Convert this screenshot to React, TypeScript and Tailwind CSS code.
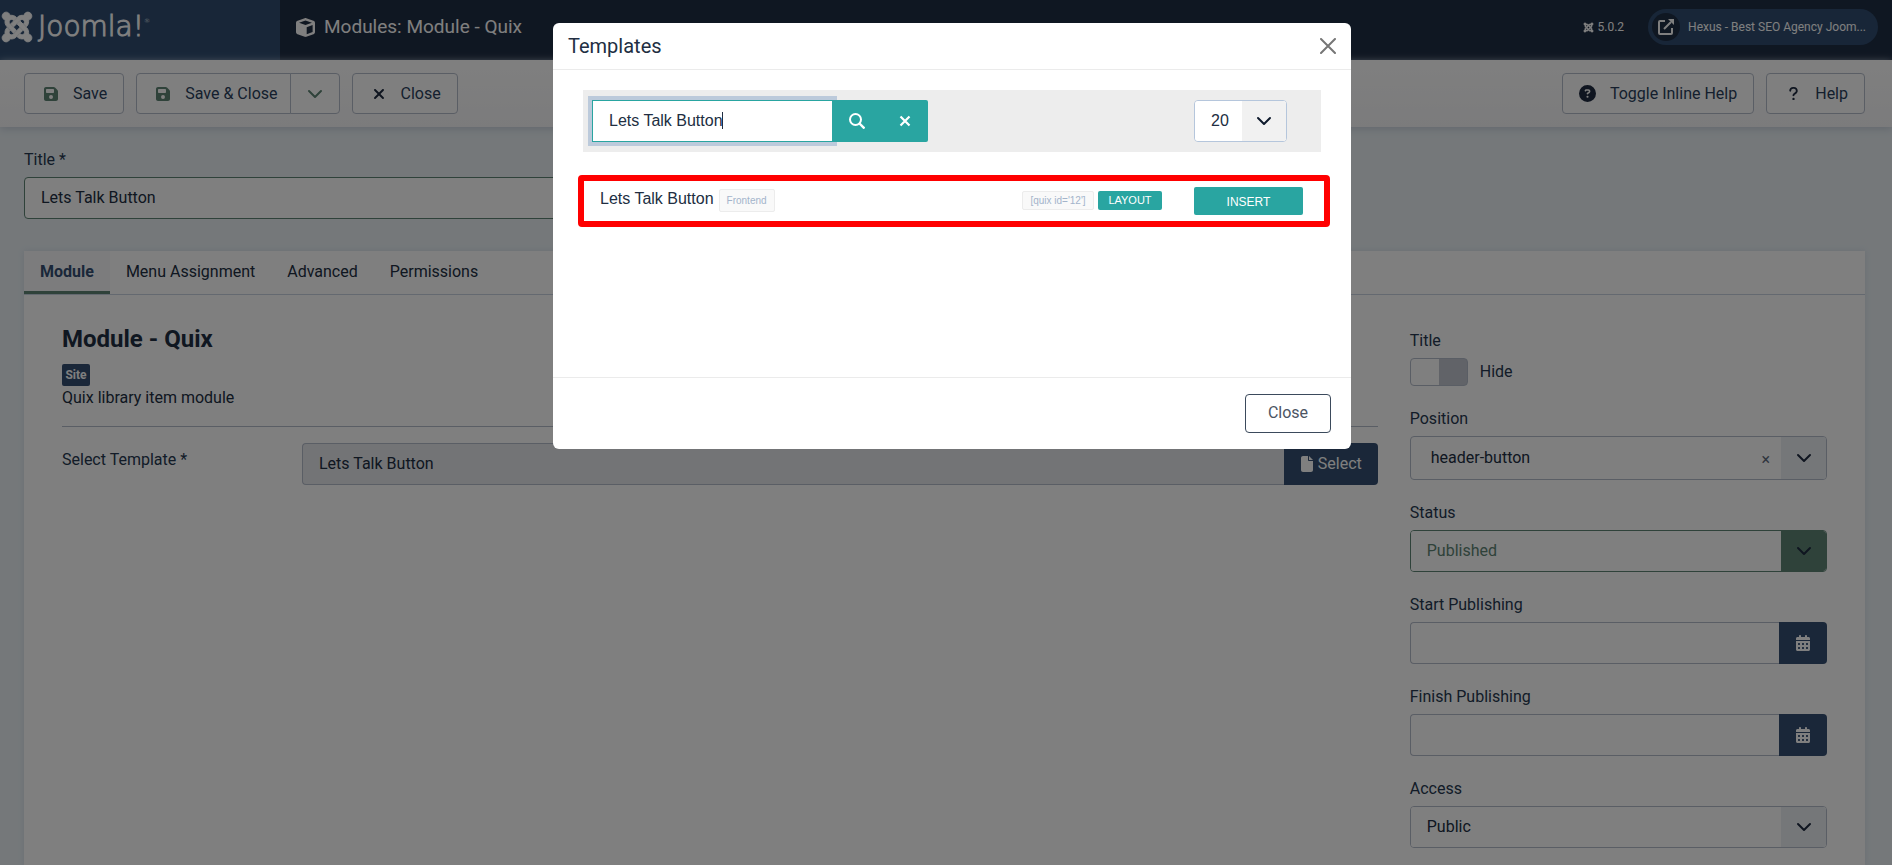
import React, { useState } from 'react';
import {
  FaCalendarDays,
  FaCircleQuestion,
  FaCube,
  FaFile,
  FaFloppyDisk,
  FaJoomla,
  FaQuestion,
  FaXmark,
} from 'react-icons/fa6';

interface SelectFieldProps {
  id: string;
  label: string;
  value: string;
  success?: boolean;
}

const toolbarButton =
  'flex h-[41px] items-center rounded border border-[#b5bcca] bg-white text-[#2a3f5c]';

const tabs = ['Module', 'Menu Assignment', 'Advanced', 'Permissions'];

const Chevron: React.FC<{ className?: string }> = ({ className }) => (
  <svg viewBox="0 0 16 16" fill="none" stroke="currentColor" strokeWidth="2" strokeLinecap="round" strokeLinejoin="round" className={className}>
    <path d="M2 5l6 6 6-6" />
  </svg>
);

const SelectField: React.FC<SelectFieldProps> = ({ id, label, value, success }) => (
  <div>
    <label htmlFor={id} className="block pt-px">{label}</label>
    <div
      className={
        success
          ? 'relative mt-[5px] flex h-[42px] overflow-hidden rounded border border-[#5e8474]'
          : 'relative mt-[5px] flex h-[42px] overflow-hidden rounded border border-[#b5bcca]'
      }
    >
      <select
        id={id}
        className={
          success
            ? 'w-full appearance-none bg-white px-4 text-[#5e8474]'
            : 'w-full appearance-none bg-white px-4 text-[#212e42]'
        }
      >
        <option>{value}</option>
      </select>
      <div
        className={
          success
            ? 'pointer-events-none absolute inset-y-0 right-0 flex w-[45px] items-center justify-center bg-[#5e8474]'
            : 'pointer-events-none absolute inset-y-0 right-0 flex w-[45px] items-center justify-center bg-[#ebeff3]'
        }
      >
        <Chevron className="size-4 text-[#1f2b40]" />
      </div>
    </div>
  </div>
);

const DateField: React.FC<{ id: string; label: string }> = ({ id, label }) => (
  <div>
    <label htmlFor={id} className="block pt-px">{label}</label>
    <div className="mt-[5px] flex h-[42px]">
      <input id={id} type="text" className="min-w-0 flex-1 rounded-l border border-r-0 border-[#b5bcca] bg-white px-4" />
      <button type="button" aria-label={`Open the calendar for ${label}`} className="flex w-12 items-center justify-center rounded-r bg-[#344f73] text-white">
        <FaCalendarDays size={16} />
      </button>
    </div>
  </div>
);

const Header = () => (
  <header className="flex h-[60px] bg-[#1f2e44] text-white">
    <a href="#" className="flex w-[280px] items-center bg-[#304d71] pb-1.5">
      <FaJoomla size={34} strokeWidth={14} />
      <span className="ml-1 flex font-['DejaVu_Sans',sans-serif] text-[28px] leading-8 font-extralight [-webkit-text-stroke:1px]">
        Joomla!
        <span className="text-[6px] leading-5 [-webkit-text-stroke:0px]">®</span>
      </span>
    </a>
    <div className="flex flex-1 items-center pr-3.5 pb-1.5 pl-4">
      <FaCube size={19} />
      <h1 className="ml-[9px] text-[19px]">Modules: Module - Quix</h1>
      <div className="ml-auto flex items-center gap-1 text-xs">
        <FaJoomla size={11} strokeWidth={14} />
        5.0.2
      </div>
      <a href="#" className="ml-6 flex h-9 items-center gap-2 rounded-full bg-[#304d71] pr-3 pl-1 text-xs">
        <span className="flex size-7 items-center justify-center rounded-full bg-[#1f2e44]">
          <svg viewBox="0 0 16 16" fill="none" stroke="currentColor" strokeWidth="2" strokeLinejoin="round" className="size-4">
            <path d="M7 2H2a1 1 0 0 0-1 1v11a1 1 0 0 0 1 1h11a1 1 0 0 0 1-1V9M6 10l7-7" />
            <path d="M10 0h6v6z" fill="currentColor" stroke="none" />
          </svg>
        </span>
        Hexus - Best SEO Agency Joom...
      </a>
    </div>
  </header>
);

const Toolbar = () => (
  <div className="flex h-[67px] items-center gap-3 bg-linear-to-b from-white to-[#f7f7f9] pr-[27px] pl-6 shadow-[0_2px_8px_#c5cfdb]">
    <button type="button" className={`${toolbarButton} pr-4 pl-[18px]`}>
      <FaFloppyDisk size={16} className="mr-3.5 text-[#5e8474]" />
      Save
    </button>
    <div className="flex">
      <button type="button" className={`${toolbarButton} rounded-r-none pr-3 pl-[18px]`}>
        <FaFloppyDisk size={16} className="mr-3.5 text-[#5e8474]" />
        Save &amp; Close
      </button>
      <button type="button" aria-label="More save options" className={`${toolbarButton} -ml-px w-[50px] justify-center rounded-l-none`}>
        <Chevron className="size-4 text-[#5e8474]" />
      </button>
    </div>
    <button type="button" className={`${toolbarButton} pr-4 pl-[18px]`}>
      <FaXmark size={16} className="mr-3.5 text-[#1f2b40]" />
      Close
    </button>
    <button type="button" className={`${toolbarButton} ml-auto pr-4 pl-4`}>
      <FaCircleQuestion size={17} className="mr-3.5 text-[#1f2b40]" />
      Toggle Inline Help
    </button>
    <button type="button" className={`${toolbarButton} pr-4 pl-[19px]`}>
      <FaQuestion size={15} className="mr-3.5 text-[#1f2b40]" />
      Help
    </button>
  </div>
);

const ModuleForm = () => (
  <div className="col-span-3 pt-7">
    <h2 className="text-2xl font-bold text-[#212e42]">Module - Quix</h2>
    <span className="mt-[9px] flex h-[22px] w-7 items-center justify-center rounded-xs bg-[#344f73] text-xs font-bold text-white">
      Site
    </span>
    <p className="pt-px leading-[22px] text-[#212e42]">Quix library item module</p>
    <hr className="mt-[17px] border-[#b5bcca]" />
    <div className="mt-4 flex">
      <label htmlFor="template" className="w-60 pt-[5px]">Select Template *</label>
      <div className="flex h-[42px] flex-1">
        <input
          id="template"
          type="text"
          readOnly
          value="Lets Talk Button"
          className="min-w-0 flex-1 rounded-l border border-r-0 border-[#b5bcca] bg-[#e6e8ec] px-4 text-[#212e42]"
        />
        <button type="button" className="flex items-center gap-[3px] rounded-r bg-[#344f73] pr-4 pl-[15px] text-white">
          <FaFile size={16} />
          Select
        </button>
      </div>
    </div>
  </div>
);

const Sidebar = () => (
  <div className="flex flex-col gap-5 pt-[34px] pb-4">
    <fieldset>
      <legend>Title</legend>
      <div className="mt-[5px] flex items-center gap-3">
        <input
          id="show-title"
          type="checkbox"
          role="switch"
          className="h-7 w-[58px] appearance-none rounded border border-[#b5bcca] bg-[linear-gradient(to_right,#fff_50%,#c2c7d1_50%)]"
        />
        <label htmlFor="show-title">Hide</label>
      </div>
    </fieldset>
    <div>
      <label htmlFor="position" className="block pt-px">Position</label>
      <div className="mt-[5px] flex h-11 items-center overflow-hidden rounded border border-[#b5bcca]">
        <input id="position" type="text" defaultValue="header-button" className="min-w-0 flex-1 pl-5 text-[#212e42]" />
        <button type="button" aria-label="Remove item" className="mt-1 mr-[11px] text-[#5f6b7d]">×</button>
        <button type="button" aria-label="Show positions" className="flex h-full w-[45px] items-center justify-center bg-[#ebeff3]">
          <Chevron className="size-4 text-[#1f2b40]" />
        </button>
      </div>
    </div>
    <SelectField id="status" label="Status" value="Published" success />
    <DateField id="start" label="Start Publishing" />
    <DateField id="finish" label="Finish Publishing" />
    <SelectField id="access" label="Access" value="Public" />
  </div>
);

const TemplatesDialog = () => {
  const [search, setSearch] = useState('Lets Talk Button');

  return (
    <div role="dialog" aria-labelledby="dialog-title" className="w-full max-w-[798px] self-start rounded-md bg-white text-[#212e42]">
      <div className="flex h-[47px] items-center justify-between border-b border-[#ebebeb] px-[15px]">
        <h3 id="dialog-title" className="text-xl">Templates</h3>
        <button type="button" aria-label="Close dialog" className="-mr-px p-px text-[#767676]">
          <svg viewBox="0 0 16 16" stroke="currentColor" strokeWidth="2" strokeLinecap="round" className="size-4">
            <path d="M1 1l14 14M15 1L1 15" />
          </svg>
        </button>
      </div>

      <div className="h-[307px] pt-5 pr-[21px] pl-[25px] font-['Liberation_Sans',sans-serif]">
        {/* Filters */}
        <div className="mr-[9px] ml-[5px] flex h-[62px] items-center bg-[#ededed] pr-[34px] pl-[9px]">
          <div className="relative">
            <input
              type="text"
              aria-label="Search"
              value={search}
              onChange={(e) => setSearch(e.target.value)}
              className="block h-[42px] w-[241px] border border-[#29a5a1] bg-white px-4 shadow-[0_0_0_4px_#bccadb] outline-none"
            />
            <span className="absolute top-3 left-[130px] h-[17px] w-px bg-[#212e42]" />
          </div>
          <button type="button" aria-label="Search templates" className="relative -ml-px flex h-[42px] w-[49px] items-center justify-center bg-[#29a5a1] text-white">
            <svg viewBox="0 0 16 16" fill="none" stroke="currentColor" strokeWidth="2" className="size-4">
              <circle cx="6.5" cy="6.5" r="5.5" />
              <path d="M10.5 10.5l5 5" strokeWidth="2.4" />
            </svg>
          </button>
          <button type="button" aria-label="Clear" className="relative flex h-[42px] w-[47px] items-center justify-center rounded-r-xs bg-[#29a5a1] text-white">
            <svg viewBox="0 0 12 12" fill="none" stroke="currentColor" strokeWidth="2.2" className="size-3">
              <path d="M1.5 1.5l9 9M10.5 1.5l-9 9" />
            </svg>
          </button>
          <div className="relative ml-auto h-[42px] w-[93px] overflow-hidden rounded border border-[#b5c6dc]">
            <select aria-label="Items per page" className="size-full appearance-none bg-white px-4">
              <option>20</option>
            </select>
            <div className="pointer-events-none absolute inset-y-0 right-0 flex w-11 items-center justify-center bg-[#f1f1f1]">
              <Chevron className="size-4 text-[#0f1b2d]" />
            </div>
          </div>
        </div>

        {/* Template list */}
        <div className="mt-[23px] flex h-[52px] items-center rounded border-6 border-[#ff0000] pr-[21px] pb-0.5 pl-4">
          <span className="-mt-0.5">Lets Talk Button</span>
          <span className="ml-[5px] flex h-[23px] w-14 items-center justify-center rounded-xs border border-[#ececec] bg-[#f9f9f9] text-[10px] text-[#a3b4cb]">
            Frontend
          </span>
          <code className="ml-auto flex h-[19px] w-[72px] items-center justify-center rounded-xs border border-[#ececec] bg-[#f9f9f9] font-['Liberation_Sans',sans-serif] text-[10px] text-[#a3b4cb]">
            [quix id='12']
          </code>
          <span className="ml-1 flex h-[19px] w-16 items-center justify-center rounded-xs bg-[#29a5a1] text-[11px] text-white">
            LAYOUT
          </span>
          <button type="button" className="mt-0.5 ml-8 h-7 w-[109px] rounded-xs bg-[#29a5a1] pt-0.5 text-xs text-white">
            INSERT
          </button>
        </div>
      </div>

      <div className="flex h-[72px] items-center justify-end border-t border-[#ebebeb] px-5">
        <button type="button" className="h-[39px] w-[86px] rounded border border-[#3b4a5c] bg-white pb-0.5 text-[#4c5563]">
          Close
        </button>
      </div>
    </div>
  );
};

export default function App() {
  return (
    <div className="flex min-h-screen flex-col bg-[#eaf1f5] font-[Roboto,sans-serif] text-base text-[#263850]">
      <Header />
      <Toolbar />

      <main className="flex flex-1 flex-col pt-[21px] pr-[27px] pl-6">
        <label htmlFor="title">Title *</label>
        <input
          id="title"
          type="text"
          defaultValue="Lets Talk Button"
          className="mt-[5px] h-[42px] w-1/2 rounded border border-[#5e8474] bg-white px-4 pb-px text-[#212e42]"
        />

        <div className="mt-8 flex-1 bg-white shadow-[0_0_6px_#d3dde8]">
          <div role="tablist" className="flex h-11 border-b border-[#c8d3e0]">
            {tabs.map((tab, index) => (
              <button
                key={tab}
                type="button"
                role="tab"
                aria-selected={index === 0}
                className={
                  index === 0
                    ? 'border-b-3 border-[#5e8474] bg-[#f8f9fb] px-4 pt-0.5 font-bold text-[#344f73]'
                    : 'border-b-3 border-transparent px-4 pt-0.5 text-[#212e42]'
                }
              >
                {tab}
              </button>
            ))}
          </div>
          <div className="grid grid-cols-4 gap-8 px-[38px]">
            <ModuleForm />
            <Sidebar />
          </div>
        </div>
      </main>

      {/* Backdrop */}
      <div className="fixed inset-0 flex justify-center bg-black/50 pt-[23px] pl-3">
        <TemplatesDialog />
      </div>
    </div>
  );
}
